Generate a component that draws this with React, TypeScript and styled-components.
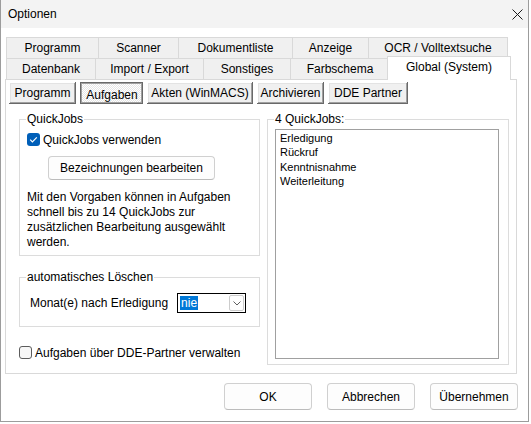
import React from 'react';
import styled, { createGlobalStyle, css } from 'styled-components';

const GlobalStyle = createGlobalStyle`
  html, body {
    margin: 0;
    padding: 0;
    background: #ffffff;
  }
  body {
    font-family: 'Liberation Sans', Arial, sans-serif;
    font-size: 12px;
    color: #000000;
  }
  * {
    box-sizing: border-box;
  }
`;

const rowOne = [
  { label: 'Programm', width: 93 },
  { label: 'Scanner', width: 81 },
  { label: 'Dokumentliste', width: 115 },
  { label: 'Anzeige', width: 77 },
  { label: 'OCR / Volltextsuche', width: 140 },
];

const rowTwo = [
  { label: 'Datenbank', width: 90 },
  { label: 'Import / Export', width: 109 },
  { label: 'Sonstiges', width: 88 },
  { label: 'Farbschema', width: 100 },
  { label: 'Global (System)', width: 124, active: true },
];

const subTabs = [
  { label: 'Programm', width: 67 },
  { label: 'Aufgaben', width: 63, pressed: true },
  { label: 'Akten (WinMACS)', width: 106 },
  { label: 'Archivieren', width: 67 },
  { label: 'DDE Partner', width: 80 },
];

const quickJobs = ['Erledigung', 'Rückruf', 'Kenntnisnahme', 'Weiterleitung'];

export default function App() {
  return (
    <>
      <GlobalStyle />
      <Window>
        <TitleBar>
          <span>Optionen</span>
          <CloseIcon width="11" height="11" viewBox="0 0 11 11">
            <path d="M0.5 0.5 L10.5 10.5 M10.5 0.5 L0.5 10.5" stroke="#1a1a1a" strokeWidth="1" fill="none" />
          </CloseIcon>
        </TitleBar>

        <Body>
          <TabControl>
            <TabRow>
              {rowOne.map((t) => (
                <Tab key={t.label} $w={t.width}>{t.label}</Tab>
              ))}
            </TabRow>
            <TabRow>
              {rowTwo.map((t) => (
                <Tab key={t.label} $w={t.width} $active={t.active}>{t.label}</Tab>
              ))}
            </TabRow>

            <TabPage>
              <SubTabBar>
                {subTabs.map((s) => (
                  <SubTab key={s.label} $w={s.width} $pressed={s.pressed}>{s.label}</SubTab>
                ))}
              </SubTabBar>

              <Columns>
                <LeftColumn>
                  <GroupBox $padLeft={7}>
                    <Legend $shift={-1}>QuickJobs</Legend>
                    <CheckRow style={{ marginTop: 6 }}>
                      <CheckBox $checked>
                        <svg width="13" height="13" viewBox="0 0 13 13">
                          <path d="M3.2 6.6 L5.4 8.8 L9.8 4.3" stroke="#ffffff" strokeWidth="1.2" fill="none" />
                        </svg>
                      </CheckBox>
                      QuickJobs verwenden
                    </CheckRow>
                    <EditButton>Bezeichnungen bearbeiten</EditButton>
                    <Description>
                      Mit den Vorgaben können in Aufgaben<br />
                      schnell bis zu 14 QuickJobs zur<br />
                      zusätzlichen Bearbeitung ausgewählt<br />
                      werden.
                    </Description>
                  </GroupBox>

                  <DeleteGroup $padLeft={10}>
                    <Legend $shift={-4}>automatisches Löschen</Legend>
                    <ComboRow>
                      <span>Monat(e) nach Erledigung</span>
                      <Combo>
                        <Selected>nie</Selected>
                        <DropButton>
                          <svg width="8" height="5" viewBox="0 0 8 5">
                            <path d="M0.5 0.5 L4 4 L7.5 0.5" stroke="#606060" strokeWidth="1" fill="none" />
                          </svg>
                        </DropButton>
                      </Combo>
                    </ComboRow>
                  </DeleteGroup>

                  <CheckRow style={{ marginTop: 18 }}>
                    <CheckBox />
                    Aufgaben über DDE-Partner verwalten
                  </CheckRow>
                </LeftColumn>

                <GroupBox $padLeft={7}>
                  <Legend $shift={-1}>4 QuickJobs:</Legend>
                  <ListBox>
                    {quickJobs.map((j) => (
                      <ListItem key={j}>{j}</ListItem>
                    ))}
                  </ListBox>
                </GroupBox>
              </Columns>
            </TabPage>
          </TabControl>

          <Footer>
            <DialogButton>OK</DialogButton>
            <DialogButton>Abbrechen</DialogButton>
            <DialogButton>Übernehmen</DialogButton>
          </Footer>
        </Body>
      </Window>
    </>
  );
}

const Window = styled.div`
  width: 529px;
  height: 422px;
  border: 1px solid #9c9c9c;
  border-top: none;
  background: #ffffff;
  display: flex;
  flex-direction: column;
`;

const TitleBar = styled.div`
  height: 28px;
  flex-shrink: 0;
  display: flex;
  align-items: center;
  justify-content: space-between;
  padding-left: 7px;
  background: #f3f3f3;
  font-size: 12px;
`;

const CloseIcon = styled.svg`
  margin-right: 5px;
  margin-top: 1px;
`;

const Body = styled.div`
  padding: 9px 0 0 4px;
  display: flex;
  flex-direction: column;
`;

const TabControl = styled.div`
  width: 512px;
`;

const TabRow = styled.div`
  display: flex;
  height: 21px;
  padding-left: 1px;
`;

const Tab = styled.div<{ $w: number; $active?: boolean }>`
  width: ${(p) => p.$w}px;
  height: 21px;
  margin-left: -1px;
  display: flex;
  align-items: center;
  justify-content: center;
  background: #f0f0f0;
  border: 1px solid #d9d9d9;
  border-bottom: none;
  white-space: nowrap;
  &:first-child {
    margin-left: 0;
  }
  ${(p) =>
    p.$active &&
    css`
      position: relative;
      z-index: 1;
      margin-left: -3px;
      margin-top: -2px;
      height: 24px;
      padding-bottom: 3px;
      background: #ffffff;
    `}
`;

const TabPage = styled.div`
  height: 295px;
  border: 1px solid #d9d9d9;
  background: #ffffff;
  padding: 2px 0 0 3px;
`;

const SubTabBar = styled.div`
  display: flex;
  gap: 4px;
`;

const SubTab = styled.div<{ $w: number; $pressed?: boolean }>`
  width: ${(p) => p.$w}px;
  height: 22px;
  display: flex;
  align-items: center;
  justify-content: center;
  white-space: nowrap;
  background: #f0f0f0;
  box-shadow: inset -1px -1px #696969, inset 1px 1px #ffffff, inset -2px -2px #a0a0a0,
    inset 2px 2px #e3e3e3;
  ${(p) =>
    p.$pressed &&
    css`
      padding-top: 3px;
      padding-left: 1px;
      background-color: #ffffff;
      background-image: repeating-conic-gradient(#e6e6e6 0 25%, #ffffff 0 50%);
      background-size: 2px 2px;
      box-shadow: inset 1px 1px #696969, inset -1px -1px #696969, inset 2px 2px #a0a0a0,
        inset -2px -2px #a0a0a0;
    `}
`;

const Columns = styled.div`
  display: grid;
  grid-template-columns: 241px 242px;
  column-gap: 7px;
  align-items: start;
  padding-left: 10px;
  margin-top: 8px;
`;

const LeftColumn = styled.div`
  display: flex;
  flex-direction: column;
`;

const GroupBox = styled.fieldset<{ $padLeft: number }>`
  margin: 0;
  min-width: 0;
  border: 1px solid #dcdcdc;
  padding: 0 0 5px ${(p) => p.$padLeft}px;
  display: flex;
  flex-direction: column;
  align-items: flex-start;
`;

const DeleteGroup = styled(GroupBox)`
  margin-top: 14px;
  padding-top: 9px;
  padding-bottom: 13px;
`;

const Legend = styled.legend<{ $shift: number }>`
  padding: 0 1px;
  margin-left: ${(p) => p.$shift}px;
  line-height: 14px;
  font-size: 12px;
`;

const CheckRow = styled.label`
  display: flex;
  align-items: center;
  gap: 3px;
  height: 15px;
  white-space: nowrap;
`;

const CheckBox = styled.span<{ $checked?: boolean }>`
  width: 13px;
  height: 13px;
  flex-shrink: 0;
  border-radius: 3px;
  display: flex;
  ${(p) =>
    p.$checked
      ? css`
          background: #005fb8;
        `
      : css`
          background: #f7f7f7;
          border: 1px solid #5c5c5c;
        `}
`;

const EditButton = styled.div`
  margin: 9px 0 0 21px;
  width: 167px;
  height: 24px;
  display: flex;
  align-items: center;
  justify-content: center;
  background: #fdfdfd;
  border: 1px solid #d0d0d0;
  border-bottom-color: #bcbcbc;
  border-radius: 4px;
`;

const Description = styled.p`
  margin: 10px 0 0;
  line-height: 15px;
  white-space: nowrap;
`;

const ComboRow = styled.div`
  display: flex;
  align-items: center;
  gap: 9px;
  height: 20px;
  white-space: nowrap;
`;

const Combo = styled.div`
  width: 69px;
  height: 20px;
  border: 1px solid #000000;
  background: #ffffff;
  display: flex;
  align-items: center;
  justify-content: space-between;
  padding: 0 1px 0 2px;
`;

const Selected = styled.span`
  background: #0078d7;
  color: #ffffff;
  line-height: 14px;
  padding: 0 1px;
`;

const DropButton = styled.span`
  width: 15px;
  height: 16px;
  border: 1px solid #cccccc;
  border-radius: 2px;
  display: flex;
  align-items: center;
  justify-content: center;
`;

const ListBox = styled.div`
  margin-top: 3px;
  width: 224px;
  height: 230px;
  border: 1px solid #a0a0a0;
  padding: 1px 0 0 4px;
  font-size: 11px;
  line-height: 14.4px;
  background: #ffffff;
`;

const ListItem = styled.div`
  white-space: nowrap;
`;

const Footer = styled.div`
  display: flex;
  justify-content: flex-end;
  gap: 15px;
  margin-top: 9px;
  padding-right: 10px;
`;

const DialogButton = styled.div`
  width: 88px;
  height: 27px;
  display: flex;
  align-items: center;
  justify-content: center;
  background: #fdfdfd;
  border: 1px solid #d0d0d0;
  border-bottom-color: #bcbcbc;
  border-radius: 4px;
`;
